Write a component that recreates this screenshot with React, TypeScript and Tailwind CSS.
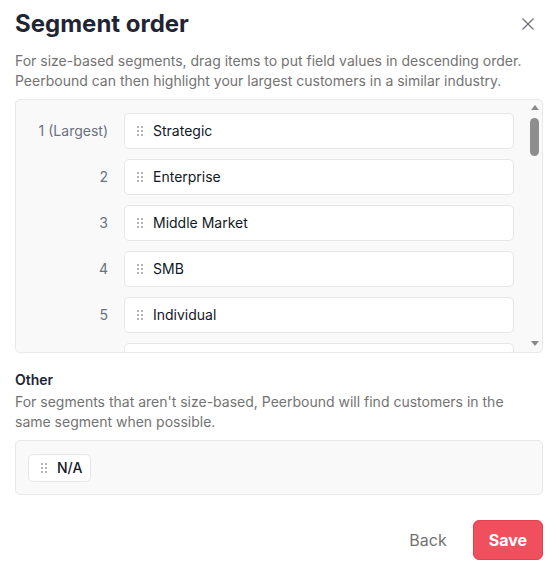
import { X } from "lucide-react";

const segments = ["Strategic", "Enterprise", "Middle Market", "SMB", "Individual"];

const Grip = () => (
  <svg width="6" height="10" viewBox="0 0 6 10" className="shrink-0 text-[#b3b3b3]" fill="currentColor">
    <rect x="0" y="0" width="2" height="2" />
    <rect x="4" y="0" width="2" height="2" />
    <rect x="0" y="4" width="2" height="2" />
    <rect x="4" y="4" width="2" height="2" />
    <rect x="0" y="8" width="2" height="2" />
    <rect x="4" y="8" width="2" height="2" />
  </svg>
);

const SegmentItem = ({ name }: { name?: string }) => (
  <div className="flex h-9 flex-1 items-center gap-[10px] rounded-[5px] border border-[#e6e6e6] bg-white pl-3 text-sm text-[#111827]">
    {name && <Grip />}
    {name && <span>{name}</span>}
  </div>
);

// classic scrollbar look for the list
const ScrollBar = () => (
  <div className="flex w-[15px] shrink-0 flex-col items-center pt-[5px] pb-[6px]">
    <svg width="8" height="5" viewBox="0 0 8 5" className="text-[#8a8a8a]" fill="currentColor">
      <polygon points="4,0 8,5 0,5" />
    </svg>
    <div className="mt-[8px] h-[38px] w-[9px] rounded-full bg-[#8e8e8e]" />
    <div className="flex-1" />
    <svg width="8" height="5" viewBox="0 0 8 5" className="text-[#8a8a8a]" fill="currentColor">
      <polygon points="0,0 8,0 4,5" />
    </svg>
  </div>
);

export default function App() {
  return (
    <div className="min-h-[573px] bg-white pl-[15px] pr-4 pt-2 font-['Inter',sans-serif]">
      <div className="flex items-center justify-between">
        <h2 className="text-2xl leading-8 font-bold text-[#1f2533]">Segment order</h2>
        <button className="mr-[5px] flex h-5 w-5 items-center justify-center text-[#6b7280]">
          <X size={20} strokeWidth={1.5} />
        </button>
      </div>
      <p className="mt-[11px] text-sm leading-5 text-[#737373]">
        For size-based segments, drag items to put field values in descending order.
        Peerbound can then highlight your largest customers in a similar industry.
      </p>

      <div className="mt-2 flex h-[254px] overflow-hidden rounded-[5px] border border-[#e8e8e8] bg-[#f9f9f9]">
        <div className="flex flex-1 flex-col gap-[10px] overflow-hidden pl-4 pr-[13px] pt-[13px]">
          {segments.map((name, i) => (
            <div key={name} className="flex items-center gap-4">
              <span className="w-[76px] shrink-0 text-right text-sm text-[#6b7280]">
                {i === 0 ? "1 (Largest)" : i + 1}
              </span>
              <SegmentItem name={name} />
            </div>
          ))}
          <div className="flex shrink-0 items-center gap-4">
            <span className="w-[76px] shrink-0" />
            <SegmentItem />
          </div>
        </div>
        <ScrollBar />
      </div>

      <h3 className="mt-[17px] text-sm leading-5 font-semibold text-[#1f2533]">Other</h3>
      <p className="mt-[2px] text-sm leading-5 text-[#737373]">
        For segments that aren't size-based, Peerbound will find customers in the
        same segment when possible.
      </p>
      <div className="mt-2 rounded-[5px] border border-[#e8e8e8] bg-[#f9f9f9] px-3 pt-[13px] pb-3">
        <div className="inline-flex h-7 items-center gap-[10px] rounded-[5px] border border-[#e6e6e6] bg-white pl-3 pr-2 text-sm font-medium text-[#111827]">
          <Grip />
          <span>N/A</span>
        </div>
      </div>

      <div className="mt-[25px] flex items-center justify-end gap-[10px]">
        <button className="px-4 text-base text-[#737373]">Back</button>
        <button className="h-10 rounded-md border border-[#e5404f] bg-[#f04f5e] px-[15px] text-base font-bold text-white">
          Save
        </button>
      </div>
    </div>
  );
}
